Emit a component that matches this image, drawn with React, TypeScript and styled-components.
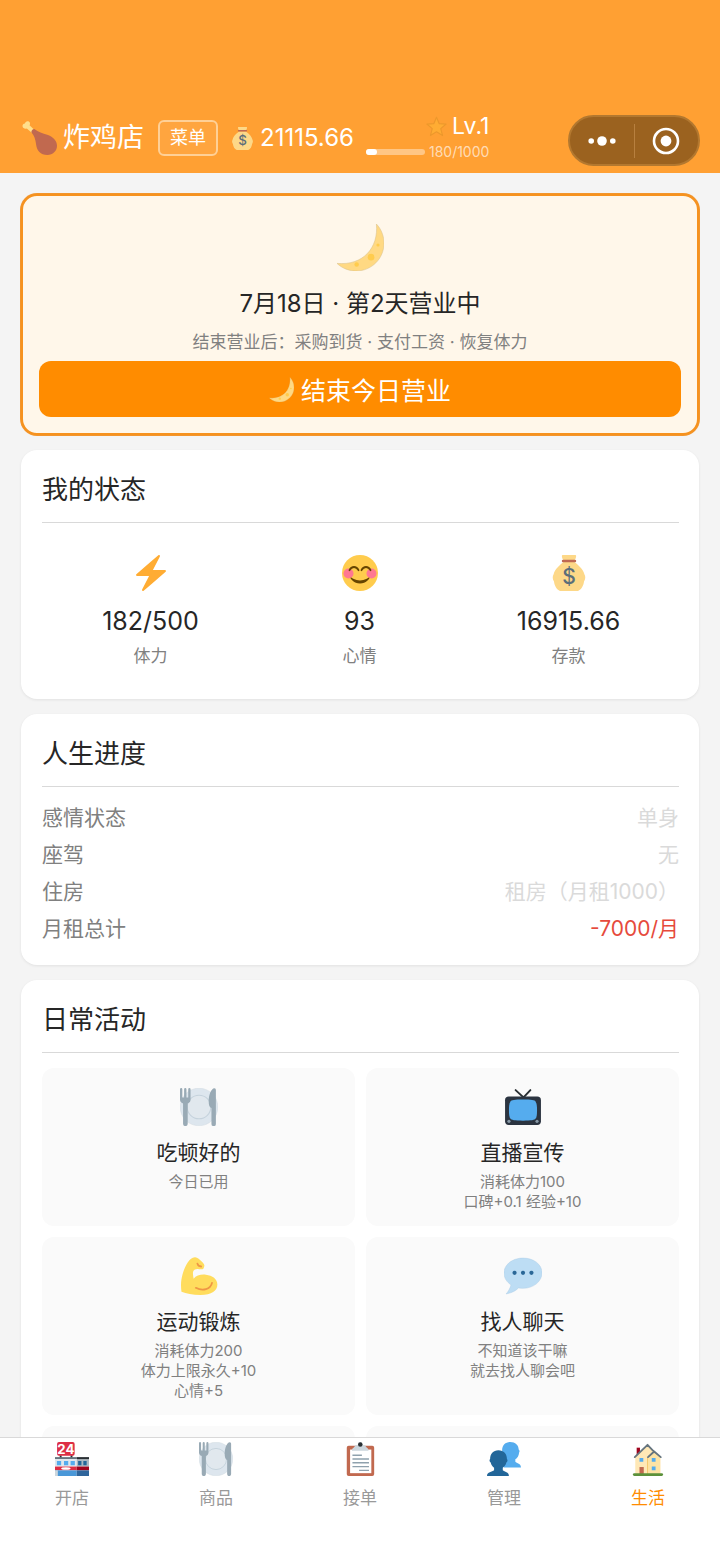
import type { ReactNode } from "react";
import styled, { createGlobalStyle } from "styled-components";

const GlobalStyle = createGlobalStyle`
  * {
    box-sizing: border-box;
  }

  body {
    margin: 0;
    background: #f4f4f4;
    color: #262626;
    font-family: Inter, "Noto Sans CJK SC", sans-serif;
    font-size: 21px;
  }

  h1, h2, h3, p, dl, dd {
    margin: 0;
    font-weight: 400;
  }

  button {
    font-family: inherit;
    cursor: pointer;
  }
`;

const Shell = styled.div`
  display: flex;
  flex-direction: column;
  height: 100vh;
`;

const Header = styled.header`
  display: flex;
  align-items: center;
  justify-content: space-between;
  flex: none;
  padding: 112px 20px 4px;
  background: #ffa033;
  color: #fff;
`;

const HeaderInfo = styled.div`
  display: flex;
  align-items: center;
  padding-bottom: 5px;
`;

const ShopName = styled.h1`
  display: flex;
  align-items: center;
  gap: 6px;
  margin-right: 14px;
  font-size: 27px;
  line-height: 36px;
`;

const MenuButton = styled.button`
  height: 36px;
  margin-right: 13px;
  padding: 0 10px;
  border: 2px solid #ffd096;
  border-radius: 6px;
  background: rgba(255, 255, 255, 0.06);
  color: #fff;
  font-size: 18px;
  line-height: 30px;
`;

const Money = styled.div`
  display: flex;
  align-items: center;
  gap: 6px;
  margin-right: 12px;
  font-size: 24px;
  line-height: 36px;
`;

const Level = styled.div`
  display: flex;
  flex-direction: column;
  align-items: flex-end;
`;

const LevelName = styled.div`
  display: flex;
  align-items: center;
  gap: 5px;
  font-size: 23px;
  line-height: 28px;
`;

const Experience = styled.div`
  display: flex;
  align-items: center;
  gap: 4px;
  color: rgba(255, 255, 255, 0.65);
  font-size: 14px;
  line-height: 24px;
`;

const ExperienceBar = styled.div`
  width: 59px;
  height: 6px;
  border-radius: 3px;
  background: #ffc685;
`;

const ExperienceFill = styled.div`
  height: 100%;
  border-radius: 3px;
  background: #fff;
`;

const Capsule = styled.div`
  display: flex;
  align-items: center;
  width: 132px;
  height: 51px;
  border: 2px solid #b3782f;
  border-radius: 26px;
  background: #9b621f;
`;

const CapsuleButton = styled.button`
  display: flex;
  align-items: center;
  justify-content: center;
  flex: 1;
  height: 34px;
  padding: 0;
  border: none;
  background: none;

  & + & {
    border-left: 1px solid #b8803f;
  }
`;

const Content = styled.main`
  display: flex;
  flex-direction: column;
  gap: 15px;
  flex: 1;
  min-height: 0;
  overflow-y: auto;
  padding: 21px;
  scrollbar-width: none;
`;

const DayCard = styled.section`
  display: flex;
  flex-direction: column;
  align-items: center;
  flex: none;
  padding: 27px 16px 16px;
  border: 2px solid #f6921e;
  border-radius: 16px;
  background: #fff7ea;
  box-shadow: 0 0 0 1px #f2952c;
`;

const DayTitle = styled.h2`
  margin-top: 15px;
  font-size: 24px;
  line-height: 36px;
`;

const DayHint = styled.p`
  margin: 8px 0 7px;
  color: #808080;
  font-size: 17px;
  line-height: 24px;
`;

const EndDayButton = styled.button`
  display: flex;
  align-items: center;
  justify-content: center;
  gap: 7px;
  width: 100%;
  height: 56px;
  border: none;
  border-radius: 12px;
  background: #ff8c00;
  color: #fff;
  font-size: 25px;
`;

const Card = styled.section`
  flex: none;
  padding: 22px 20px 18px 21px;
  border-radius: 16px;
  background: #fff;
  box-shadow: 0 1px 3px rgba(0, 0, 0, 0.08);
`;

const CardTitle = styled.h2`
  padding-bottom: 14px;
  border-bottom: 1px solid #d9d9d9;
  font-size: 26px;
  line-height: 36px;
`;

const Stats = styled.div`
  display: grid;
  grid-template-columns: repeat(3, 1fr);
  padding: 32px 6px 13px 4px;
`;

const Stat = styled.div`
  display: flex;
  flex-direction: column;
  align-items: center;
`;

const StatValue = styled.div`
  margin: 12px 0 5px;
  font-size: 25px;
  line-height: 36px;
`;

const StatLabel = styled.div`
  color: #808080;
  font-size: 17px;
  line-height: 24px;
`;

const Progress = styled.dl`
  padding-top: 12px;
`;

const ProgressRow = styled.div`
  display: flex;
  justify-content: space-between;
  line-height: 37px;
`;

const ProgressLabel = styled.dt`
  color: #808080;
`;

const ProgressValue = styled.dd<{ $negative?: boolean }>`
  color: ${({ $negative }) => ($negative ? "#e64a3c" : "#dadada")};
`;

const Activities = styled.div`
  display: grid;
  grid-template-columns: 1fr 1fr;
  gap: 11px;
  padding-top: 15px;
`;

const ActivityCard = styled.button`
  display: flex;
  flex-direction: column;
  align-items: center;
  min-height: 158px;
  padding: 20px 10px 14px;
  border: none;
  border-radius: 12px;
  background: #fafafa;
  color: inherit;
`;

const ActivityName = styled.span`
  margin: 13px 0 5px;
  font-size: 21px;
  line-height: 28px;
`;

const ActivityNote = styled.span`
  color: #808080;
  font-size: 15px;
  line-height: 20px;
`;

const TabBar = styled.nav`
  display: grid;
  grid-template-columns: repeat(5, 1fr);
  flex: none;
  height: 127px;
  border-top: 1px solid #d9d9d9;
  background: #fff;
`;

const Tab = styled.a<{ $active?: boolean }>`
  display: flex;
  flex-direction: column;
  align-items: center;
  gap: 10px;
  padding-top: 4px;
  color: ${({ $active }) => ($active ? "#ff8c00" : "#999")};
  font-size: 17px;
  line-height: 24px;
  text-decoration: none;
`;

interface IconProps {
  size: number;
}

function Icon({ size, children }: IconProps & { children: ReactNode }) {
  return (
    <svg width={size} height={size} viewBox="0 0 36 36" aria-hidden="true">
      {children}
    </svg>
  );
}

function Drumstick({ size }: IconProps) {
  return (
    <Icon size={size}>
      <path
        d="M11.500 12.500 6.600 8.200C5 8.900 2.900 8.200 2.500 6.400c-.4-1.500.7-2.900 2.300-3C5 1.700 6.700.7 8.200 1.300c1.700.7 2 2.600 1.100 3.900l5 4.800z"
        fill="#ffdf8c"
      />
      <path
        d="M11.200 12.200c-.5-1.600 1.300-3.800 3.100-3.300 3.200 2.700 7.900 4 12.200 5.500 5.400 1.900 9.500 5.500 9.500 10.600 0 5.100-4.200 9-9.300 9-6.900 0-10.300-4.300-11-10-.6-5.300-1.800-8.700-4.500-11.800z"
        fill="#c1694f"
      />
    </Icon>
  );
}

function MoneyBag({ size }: IconProps) {
  return (
    <Icon size={size}>
      <path d="M11.500 0h13c1 0 .8 3-.9 5H12.400c-1.700-2-1.900-5-.9-5z" fill="#fdd888" />
      <path
        d="M12.500 7h11c3.200 2.500 8.800 7.300 9.800 12 1.500 2.500 1.200 5-.3 7.500-.4 3.800-2.600 8.200-6 9.500H9c-3.400-1.300-5.600-5.700-6-9.500-1.500-2.500-1.800-5-.3-7.500 1-4.700 6.600-9.500 9.800-12z"
        fill="#fdd888"
      />
      <path d="M12 4.800h12a1.200 1.200 0 0 1 0 2.400H12a1.200 1.200 0 0 1 0-2.400z" fill="#bf6952" />
      <text
        x="18"
        y="28.500"
        fill="#5b6e7a"
        fontSize="21"
        fontWeight="500"
        textAnchor="middle"
      >
        $
      </text>
    </Icon>
  );
}

function Star({ size }: IconProps) {
  return (
    <Icon size={size}>
      <path
        d="M18 2 22.500 13 34.500 13.800 25.300 21.600 28.400 33.500 18 27 7.600 33.500 10.700 21.600 1.500 13.800 13.500 13z"
        fill="#ffac33"
        stroke="#ed982c"
        strokeWidth="2"
        strokeLinejoin="round"
      />
    </Icon>
  );
}

function Moon({ size }: IconProps) {
  return (
    <Icon size={size}>
      <path
        d="M30.312.776C32 19 20 32 .776 30.312c8.199 7.717 21.091 7.588 29.107-.429C37.900 21.867 38.030 8.975 30.312.776z"
        fill="#ffd983"
        stroke="#d9c08a"
        strokeWidth=".4"
      />
      <g fill="#ffcc4d">
        <circle cx="31.500" cy="16.500" r="1.200" />
        <circle cx="26.300" cy="25.600" r="2.500" />
        <circle cx="15.500" cy="31.200" r="1.700" />
      </g>
    </Icon>
  );
}

function Bolt({ size }: IconProps) {
  return (
    <Icon size={size}>
      <path
        d="M32.938 15.651C32.792 15.260 32.418 15 32 15H19.925L26.890 1.458c.219-.426.106-.947-.271-1.243C26.437.071 26.218 0 26 0c-.233 0-.466.082-.653.243L18 6.588 3.347 19.243c-.316.273-.430.714-.284 1.105S3.582 21 4 21h12.075L9.110 34.542c-.219.426-.106.947.271 1.243.182.144.401.215.619.215.233 0 .466-.082.653-.243L18 29.412l14.653-12.655c.317-.273.430-.714.285-1.106z"
        fill="#ffac33"
      />
    </Icon>
  );
}

function Smile({ size }: IconProps) {
  return (
    <Icon size={size}>
      <circle cx="18" cy="18" r="18" fill="#ffcc4d" />
      <circle cx="6.500" cy="18.500" r="5" fill="#ff7892" />
      <circle cx="29.500" cy="18.500" r="5" fill="#ff7892" />
      <path
        d="M27.335 22.629c-.178-.161-.444-.171-.635-.029-.039.029-3.922 2.900-8.700 2.900-4.766 0-8.662-2.871-8.700-2.900-.191-.142-.457-.130-.635.029-.177.160-.217.424-.094.628C8.700 23.472 11.788 28.500 18 28.500s9.301-5.028 9.429-5.243c.123-.205.084-.468-.094-.628z"
        fill="#664500"
      />
      <path
        d="M7.500 15.200c1-2 2.600-3.200 4.500-3.200s3.500 1.200 4.500 3.200M19.500 15.200c1-2 2.600-3.200 4.500-3.200s3.500 1.200 4.500 3.200"
        fill="none"
        stroke="#664500"
        strokeWidth="1.800"
        strokeLinecap="round"
      />
    </Icon>
  );
}

function Plate({ size }: IconProps) {
  return (
    <Icon size={size}>
      <circle cx="18" cy="18" r="17.800" fill="#dde6ee" stroke="#ccd6dd" strokeWidth=".4" />
      <circle cx="18" cy="18" r="11.200" fill="#e1e8ee" stroke="#c5d2dc" />
      <path
        d="M0 1.200a1.100 1.100 0 0 1 2.200 0V9h1.700V1.200a1.100 1.100 0 0 1 2.200 0V9h1.700V1.200a1.100 1.100 0 0 1 2.200 0V11c0 2-1 3-2.700 3.700v19.200a2.200 2.200 0 0 1-4.400 0V14.700C1 14 0 13 0 11zM34 2v32a2.100 2.100 0 0 1-4.200 0V19c-2-.6-2.600-3-2.600-6.500C27.200 6 29.700.5 32.500.2 33.500.1 34 .9 34 2z"
        fill="#99aab5"
      />
    </Icon>
  );
}

function Television({ size }: IconProps) {
  return (
    <Icon size={size}>
      <path
        d="m11 2 7.500 7L25 2"
        fill="none"
        stroke="#292f33"
        strokeWidth="1.800"
        strokeLinecap="round"
      />
      <rect x="1" y="8" width="34" height="27" rx="3.500" fill="#2b3440" />
      <path
        d="M18 11c8 0 11 .5 12 2s1.300 4 1.300 8-.3 6.500-1.300 8-4 2-12 2-11-.5-12-2-1.300-4-1.300-8 .3-6.500 1.300-8 4-2 12-2z"
        fill="#55acee"
      />
      <circle cx="4.700" cy="31.600" r="1.500" fill="#8899a6" />
      <circle cx="31.300" cy="31.600" r="1.500" fill="#8899a6" />
    </Icon>
  );
}

function Muscle({ size }: IconProps) {
  return (
    <Icon size={size}>
      <path
        d="M14 .2c2.400-.3 4.600 2 6.800 4.300 1.500 1.500 2.700 3 2.200 4.200l-.6 1.900c-.5 1.300-2.600 1.200-4.500.9-3-.4-5.400.6-5.600 3-.2 2.200.3 3.900.6 6 2.400-3.200 6.900-4.300 11.600-3.800 6.300.6 10.900 4.100 10.900 9.300 0 5.600-5.300 10-16 10-7.500 0-13.500-1.100-18-3C.6 27 .8 22 2.500 16 4.500 9.500 8.500.6 14 .2z"
        fill="#ffdc5d"
      />
      <path
        d="M16.500 6.300c.4 1.800 1.600 2.700 3.500 2.700M15 29.200c6.500 3.500 14 1.500 15.300-4.700"
        fill="none"
        stroke="#ef9645"
        strokeWidth="1.700"
        strokeLinecap="round"
      />
    </Icon>
  );
}

function Chat({ size }: IconProps) {
  return (
    <Icon size={size}>
      <path
        d="M18 1C8.059 1 0 7.268 0 15c0 4.868 2.574 8.768 6.604 11.335C6.080 28.644 4.859 31.569 2 35c5.758-.960 9.439-3.261 11.716-5.716 1.376.262 2.805.416 4.284.416 9.941 0 18-6.568 18-14.700S27.941 1 18 1z"
        fill="#bdddf4"
        stroke="#a9cbe4"
        strokeWidth=".4"
      />
      <g fill="#2a6797">
        <circle cx="10" cy="15" r="2" />
        <circle cx="18" cy="15" r="2" />
        <circle cx="26" cy="15" r="2" />
      </g>
    </Icon>
  );
}

function Store({ size }: IconProps) {
  return (
    <Icon size={size}>
      <path d="M5 14h2v3H5zM16.500 14h2v3h-2z" fill="#292f33" />
      <rect x="2.200" y="0" width="18.600" height="14.500" rx="2" fill="#dd2e44" />
      <text
        x="11.500"
        y="12.200"
        fill="#fff"
        fontSize="14"
        fontWeight="700"
        textAnchor="middle"
      >
        24
      </text>
      <path d="M0 16h23v2H0z" fill="#66757f" />
      <path d="M23 16h13v2.500H23z" fill="#292f33" />
      <path d="M0 18h23v8H0z" fill="#e1e8ed" />
      <path d="M23 18.500h13V26H23z" fill="#aab8c2" />
      <path d="M2 20h4.500v4.500H2zM9.500 20H14v4.500H9.500zM16.500 20H21v4.500h-4.500z" fill="#55acee" />
      <path d="M24.500 20H28v4.500h-3.500zM30 20h3.500v4.500H30z" fill="#226699" />
      <path d="M0 26h23v4H0z" fill="#dd2e44" />
      <path d="M23 26h13v4H23z" fill="#a0041e" />
      <ellipse cx="11.500" cy="28" rx="5" ry="1.300" fill="#fff" />
      <path d="M0 30h23v6H0z" fill="#4a98d8" />
      <path d="M0 30h3v6H0z" fill="#ccd6dd" />
      <path d="M23 30h13v6H23z" fill="#2f659b" />
    </Icon>
  );
}

function Clipboard({ size }: IconProps) {
  return (
    <Icon size={size}>
      <rect x="4" y="4" width="29" height="32" rx="2" fill="#c1694f" />
      <path d="M7.500 8H30v25H7.500z" fill="#fff" />
      <path
        d="M13 3.500h2.500C16 1.500 17 0 18.300 0s2.300 1.500 2.700 3.500h2.500c1 3 3.500 2.500 3.500 5.800H9.500c0-3.300 2.500-2.800 3.500-5.800z"
        fill="#ccd6dd"
      />
      <circle cx="18.300" cy="2.600" r="2.400" fill="#292f33" />
      <path
        d="M10 14h10M10 18h17.500M10 22h17.500M10 26h17.500M17 30h10.500"
        fill="none"
        stroke="#8fa1ad"
        strokeWidth="1.400"
      />
    </Icon>
  );
}

function People({ size }: IconProps) {
  return (
    <Icon size={size}>
      <path
        d="M16 9c0-5.500 3.500-9 8.500-9 5.600 0 9 3.500 9 8 1 1 1.300 2 .5 3-.3 3.500-1.800 6-4 7.300v2.500c1.500 2 6 1.500 6 6.200H18z"
        fill="#55acee"
      />
      <path
        d="M3.300 18c0-5.500 3.200-9.300 8.800-9.300 5.700 0 9 3.800 9 9.300 1 1 .8 3-.6 3.700-.6 2.500-2 4.300-3.800 5.500V30c1.800 1.800 6.500 1.500 6.500 6H0c0-4.500 5.500-4.200 7.500-6v-2.800c-1.800-1.200-3-3-3.600-5.500-1.400-.7-1.600-2.700-.6-3.700z"
        fill="#226699"
      />
    </Icon>
  );
}

function House({ size }: IconProps) {
  return (
    <Icon size={size}>
      <path d="M6 6h3.500v8H6z" fill="#a0041e" />
      <path d="M4.500 16 17 3.500 31 17v17H4.500z" fill="#ffe8b6" />
      <path d="M17.500 16.500 24 10l7 7v17H17.500z" fill="#fde3a4" />
      <path d="M17.500 16.500V34" stroke="#f4c86a" strokeWidth="1" />
      <path
        d="M4 16 17.500 3l7 7.500M18 16l6.500-6 7 6"
        fill="none"
        stroke="#66757f"
        strokeWidth="2"
        strokeLinecap="round"
        strokeLinejoin="round"
      />
      <path d="M9 17h4v4H9zM22 17h4v4h-4zM22 26h4v4h-4z" fill="#55acee" />
      <path d="M9 26.500h4.500V34H9z" fill="#c1694f" />
      <rect x="2" y="33" width="32" height="3" rx="1.500" fill="#5c913b" />
    </Icon>
  );
}

const stats = [
  { icon: Bolt, value: "182/500", label: "体力" },
  { icon: Smile, value: "93", label: "心情" },
  { icon: MoneyBag, value: "16915.66", label: "存款" },
];

const progress = [
  { label: "感情状态", value: "单身" },
  { label: "座驾", value: "无" },
  { label: "住房", value: "租房（月租1000）" },
  { label: "月租总计", value: "-7000/月", negative: true },
];

const activities = [
  { icon: Plate, name: "吃顿好的", notes: ["今日已用"] },
  { icon: Television, name: "直播宣传", notes: ["消耗体力100", "口碑+0.1 经验+10"] },
  { icon: Muscle, name: "运动锻炼", notes: ["消耗体力200", "体力上限永久+10", "心情+5"] },
  { icon: Chat, name: "找人聊天", notes: ["不知道该干嘛", "就去找人聊会吧"] },
];

const tabs = [
  { icon: Store, label: "开店" },
  { icon: Plate, label: "商品" },
  { icon: Clipboard, label: "接单" },
  { icon: People, label: "管理" },
  { icon: House, label: "生活", active: true },
];

const exp = 180;
const expMax = 1000;

export default function App() {
  return (
    <Shell>
      <GlobalStyle />
      <Header>
        <HeaderInfo>
          <ShopName>
            <Drumstick size={37} />
            炸鸡店
          </ShopName>
          <MenuButton type="button">菜单</MenuButton>
          <Money>
            <MoneyBag size={23} />
            21115.66
          </Money>
          <Level>
            <LevelName>
              <Star size={21} />
              Lv.1
            </LevelName>
            <Experience>
              <ExperienceBar>
                <ExperienceFill style={{ width: `${(exp / expMax) * 100}%` }} />
              </ExperienceBar>
              {exp}/{expMax}
            </Experience>
          </Level>
        </HeaderInfo>
        <Capsule>
          <CapsuleButton type="button" aria-label="更多">
            <svg width="28" height="10" viewBox="0 0 28 10" fill="#fff">
              <circle cx="3.200" cy="5" r="2.800" />
              <circle cx="14" cy="5" r="4.800" />
              <circle cx="24.800" cy="5" r="2.800" />
            </svg>
          </CapsuleButton>
          <CapsuleButton type="button" aria-label="关闭">
            <svg width="28" height="28" viewBox="0 0 28 28">
              <circle cx="14" cy="14" r="12" fill="none" stroke="#fff" strokeWidth="2.600" />
              <circle cx="14" cy="14" r="5.400" fill="#fff" />
            </svg>
          </CapsuleButton>
        </Capsule>
      </Header>

      <Content>
        <DayCard>
          <Moon size={48} />
          <DayTitle>7月18日 · 第2天营业中</DayTitle>
          <DayHint>结束营业后：采购到货 · 支付工资 · 恢复体力</DayHint>
          <EndDayButton type="button">
            <Moon size={25} />
            结束今日营业
          </EndDayButton>
        </DayCard>

        <Card>
          <CardTitle>我的状态</CardTitle>
          <Stats>
            {stats.map(({ icon: StatIcon, value, label }) => (
              <Stat key={label}>
                <StatIcon size={36} />
                <StatValue>{value}</StatValue>
                <StatLabel>{label}</StatLabel>
              </Stat>
            ))}
          </Stats>
        </Card>

        <Card>
          <CardTitle>人生进度</CardTitle>
          <Progress>
            {progress.map(({ label, value, negative }) => (
              <ProgressRow key={label}>
                <ProgressLabel>{label}</ProgressLabel>
                <ProgressValue $negative={negative}>{value}</ProgressValue>
              </ProgressRow>
            ))}
          </Progress>
        </Card>

        <Card>
          <CardTitle>日常活动</CardTitle>
          <Activities>
            {activities.map(({ icon: ActivityIcon, name, notes }) => (
              <ActivityCard key={name} type="button">
                <ActivityIcon size={38} />
                <ActivityName>{name}</ActivityName>
                {notes.map((note) => (
                  <ActivityNote key={note}>{note}</ActivityNote>
                ))}
              </ActivityCard>
            ))}
            <ActivityCard as="div" />
            <ActivityCard as="div" />
          </Activities>
        </Card>
      </Content>

      <TabBar>
        {tabs.map(({ icon: TabIcon, label, active }) => (
          <Tab key={label} href="#" $active={active}>
            <TabIcon size={34} />
            {label}
          </Tab>
        ))}
      </TabBar>
    </Shell>
  );
}
